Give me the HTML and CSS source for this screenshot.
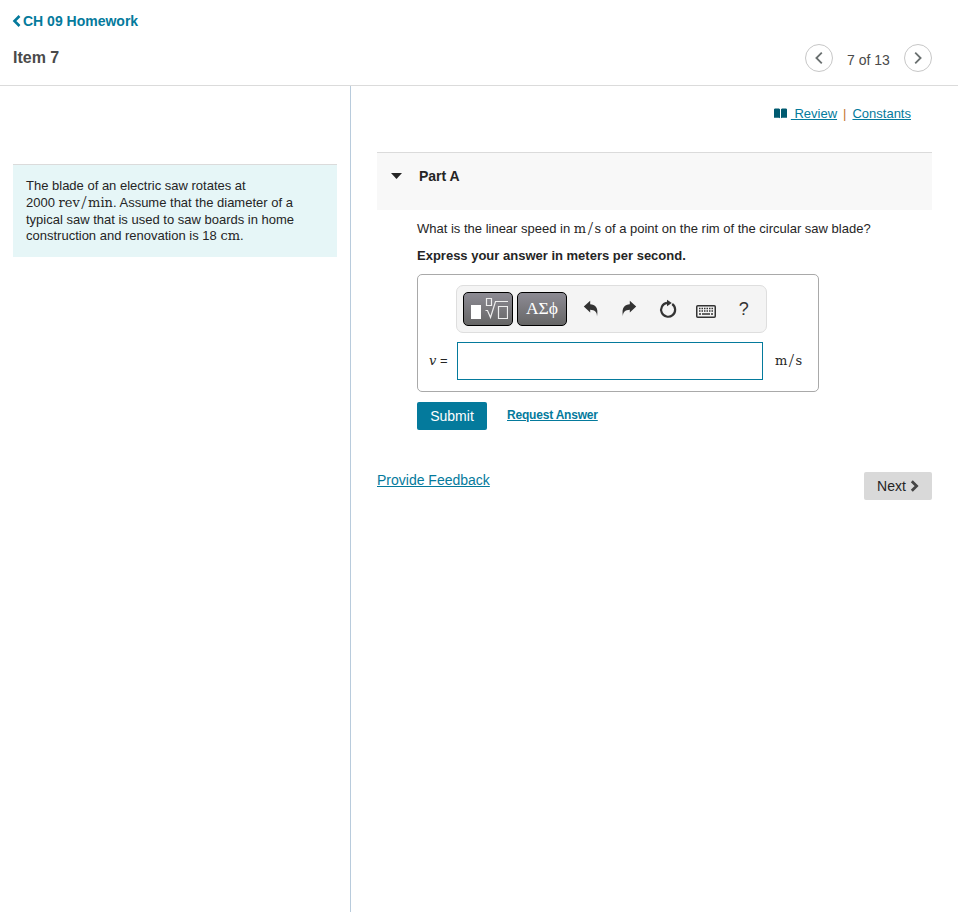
FILE: index.html
```
<!DOCTYPE html>
<html lang="en">
<head>
    <meta charset="UTF-8">
    <meta name="viewport" content="width=device-width, initial-scale=1.0">
    <title>CH 09 Homework - Item 7</title>
    <link rel="stylesheet" href="styles.css">
</head>
<body>
    <header class="header">
        <div class="header-left">
            <a class="back-link" href="#"><svg class="back-icon" width="9" height="12" viewBox="0 0 9 12"><path d="M7.500 1 2.500 6l5 5" fill="none" stroke="currentColor" stroke-width="2.600"/></svg><span>CH 09 Homework</span></a>
            <h1 class="item-title">Item 7</h1>
        </div>
        <nav class="pager">
            <a class="pager-button" href="#" aria-label="Previous"><svg width="10" height="14" viewBox="0 0 10 14"><path d="M7.800 1.600 2.400 7l5.400 5.400" fill="none" stroke="currentColor" stroke-width="1.800"/></svg></a>
            <span class="pager-text">7 of 13</span>
            <a class="pager-button" href="#" aria-label="Next"><svg width="10" height="14" viewBox="0 0 10 14"><path d="m2.200 1.600 5.400 5.400-5.400 5.400" fill="none" stroke="currentColor" stroke-width="1.800"/></svg></a>
        </nav>
    </header>

    <main class="content">
        <aside class="left-panel">
            <div class="problem">
                <p>The blade of an electric saw rotates at</p>
                <p>2000 <span class="math">rev<span class="slash">/</span>min</span>. Assume that the diameter of a</p>
                <p>typical saw that is used to saw boards in home</p>
                <p class="last-line">construction and renovation is 18 <span class="math">cm</span>.</p>
            </div>
        </aside>

        <section class="right-panel">
            <div class="resources">
                <svg class="book-icon" width="13" height="11" viewBox="0 0 13 11"><path d="M.8.500H5l1 .8v9l-1-.6H0V1.300zM8 .500h4.200l.8.800v8.400H8l-1 .6v-9z" fill="currentColor"/></svg>
                <a href="#">&nbsp;Review</a>
                <span class="divider">|</span>
                <a href="#">Constants</a>
            </div>

            <div class="part-header">
                <span class="caret"></span>
                <h2>Part A</h2>
            </div>

            <div class="part-body">
                <p class="question">What is the linear speed in <span class="math">m<span class="slash">/</span>s</span> of a point on the rim of the circular saw blade?</p>
                <p class="instructions">Express your answer in meters per second.</p>

                <div class="answer-box">
                    <div class="toolbar">
                        <button class="palette" aria-label="Templates"><svg width="40" height="24" viewBox="0 0 40 24"><path d="M3 8h10v14H3z" fill="#fff"/><path d="M18.500 1.500h5v7h-5zM30.500 9.500h9v12h-9zM17.500 13.500h2l3 7 5-16H40" fill="none" stroke="#eee" stroke-width="1.200"/></svg></button>
                        <button class="palette greek">ΑΣϕ</button>
                        <button class="tool undo" aria-label="Undo"><svg width="16" height="18" viewBox="0 0 16 18"><path d="M.8 6.500 7.200.8v3.500c4.700.2 8.600 2.800 6.800 12.200.2-4.400-2.200-6.600-6.800-6.700v2.800z" fill="currentColor"/></svg></button>
                        <button class="tool" aria-label="Redo"><svg width="16" height="18" viewBox="0 0 16 18"><path d="M15.200 6.500 8.800.8v3.500C4.100 4.500.2 7.100 2 16.500c-.2-4.400 2.200-6.600 6.800-6.700v2.800z" fill="currentColor"/></svg></button>
                        <button class="tool" aria-label="Reset"><svg class="reset-icon" width="18" height="20" viewBox="0 0 18 20"><path d="M13.200 5A7 7 0 1 1 8 3.800" fill="none" stroke="currentColor" stroke-width="2.200"/><path d="m8 .8 4.800 3.200L8 7.200z" fill="currentColor"/></svg></button>
                        <button class="tool" aria-label="Keyboard shortcuts"><svg class="keyboard-icon" width="20" height="13" viewBox="0 0 20 13"><rect x=".75" y=".75" width="18.500" height="11.500" rx="1" fill="none" stroke="currentColor" stroke-width="1.500"/><path d="M3 3.500h14M3 6h14" stroke="currentColor" stroke-width="1.500" stroke-dasharray="1.500 1"/><path d="M3 9h2m1 0h8m1 0h2" stroke="currentColor" stroke-width="1.500"/></svg></button>
                        <button class="tool help">?</button>
                    </div>
                    <div class="answer-row">
                        <label for="answer"><i>v</i> =</label>
                        <input type="text" id="answer">
                        <span class="math units">m<span class="slash">/</span>s</span>
                    </div>
                </div>

                <div class="actions">
                    <button class="submit">Submit</button>
                    <a class="request" href="#">Request Answer</a>
                </div>
            </div>

            <div class="bottom">
                <a class="feedback" href="#">Provide Feedback</a>
                <button class="next">Next <svg width="9" height="12" viewBox="0 0 9 12"><path d="m1.800 1.200 4.800 4.800-4.800 4.800" fill="none" stroke="#454545" stroke-width="2.800"/></svg></button>
            </div>
        </section>
    </main>
</body>
</html>
```
FILE: styles.css
```
* {
    box-sizing: border-box;
}
body {
    margin: 0;
    min-height: 100vh;
    display: flex;
    flex-direction: column;
    font-family: "Liberation Sans", Arial, sans-serif;
    font-size: 13px;
    color: #252525;
    background-color: #fff;
}
h1, h2, p {
    margin: 0;
}
a {
    color: #047a9c;
}
button {
    font-family: inherit;
    border: none;
    padding: 0;
    cursor: pointer;
}
svg {
    display: block;
}

/* Header */
.header {
    height: 86px;
    display: flex;
    justify-content: space-between;
    padding: 0 26px 0 13px;
    border-bottom: 1px solid #dbdbdb;
}
.back-link {
    display: flex;
    align-items: center;
    margin-top: 12px;
    height: 18px;
    font-size: 14px;
    font-weight: bold;
    text-decoration: none;
}
.back-icon {
    margin-left: -1px;
    margin-right: 2px;
}
.item-title {
    margin-top: 18px;
    font-size: 16px;
    line-height: 20px;
    color: #4a4a4a;
}
.pager {
    display: flex;
    margin-top: 44px;
}
.pager-button {
    width: 28px;
    height: 28px;
    display: flex;
    align-items: center;
    justify-content: center;
    border: 1px solid #c7c7c7;
    border-radius: 50%;
    color: #6a7070;
}
.pager-text {
    width: 71px;
    padding-top: 7px;
    text-align: center;
    font-size: 14px;
    line-height: 18px;
    color: #4a4a4a;
}

/* Panels */
.content {
    flex: 1;
    display: flex;
}
.left-panel {
    width: 351px;
    padding: 78px 13px 0;
    border-right: 1px solid #b8cbdc;
}
.problem {
    height: 93px;
    padding: 12px 13px;
    border-top: 1px solid #dbdbdb;
    background-color: #e6f6f7;
    line-height: 17px;
    white-space: nowrap;
}
.problem .last-line {
    line-height: 15px;
}
.math {
    font-family: "DejaVu Serif", serif;
    font-size: 13px;
    line-height: 1;
}
.slash {
    margin: 0 1.500px;
    font-family: "Liberation Serif", serif;
    font-size: 19px;
    line-height: 0;
    vertical-align: -2px;
}
.right-panel {
    flex: 1;
    padding: 0 26px;
}
.resources {
    height: 66px;
    padding: 19px 21px 0 0;
    display: flex;
    justify-content: flex-end;
    line-height: 17px;
}
.book-icon {
    margin: 3px 4px 0 0;
    color: #005a70;
}
.divider {
    margin: 0 6px;
    color: #c4752c;
}
.part-header {
    height: 58px;
    display: flex;
    padding: 14px 14px 0;
    border-top: 1px solid #dbdbdb;
    background-color: #f8f8f8;
}
.part-header h2 {
    font-size: 14px;
    line-height: 18px;
}
.caret {
    width: 11px;
    height: 6px;
    margin: 6px 17px 0 0;
    background-color: #252525;
    clip-path: polygon(0 0, 100% 0, 50% 100%);
}
.part-body {
    padding-left: 40px;
}
.question {
    padding-top: 10px;
    line-height: 18px;
    white-space: nowrap;
}
.instructions {
    margin-top: 9px;
    font-weight: bold;
    line-height: 18px;
}

/* Answer area */
.answer-box {
    width: 402px;
    height: 118px;
    margin-top: 9px;
    padding: 10px 0 0 11px;
    border: 1px solid #a9a9a9;
    border-radius: 5px;
}
.toolbar {
    width: 311px;
    height: 48px;
    margin-left: 27px;
    padding-left: 6px;
    display: flex;
    align-items: center;
    border: 1px solid #dedede;
    border-radius: 7px;
    background-color: #f4f4f4;
}
.palette {
    width: 50px;
    height: 34px;
    margin-right: 4px;
    display: flex;
    align-items: center;
    justify-content: center;
    border: 1.500px solid #000;
    border-radius: 5px;
    background: linear-gradient(#8d8b94, #666);
    color: #fff;
}
.greek {
    padding-bottom: 2px;
    font-family: "Liberation Serif", serif;
    font-size: 17.500px;
}
.tool {
    width: 38.200px;
    height: 34px;
    display: flex;
    align-items: center;
    justify-content: center;
    background: none;
    color: #333;
}
.undo {
    margin-left: 1px;
}
.reset-icon {
    margin-left: 2px;
}
.keyboard-icon {
    margin-top: 4px;
}
.help {
    font-size: 18px;
}
.answer-row {
    display: flex;
    align-items: center;
    margin-top: 9px;
}
.answer-row label {
    width: 28px;
    padding-bottom: 1px;
    font-size: 13px;
}
.answer-row i {
    font-family: "DejaVu Serif", serif;
    font-size: 13px;
}
.answer-row input {
    width: 306px;
    height: 38px;
    border: 1px solid #047a9c;
}
.units {
    margin-left: 12px;
    padding-bottom: 1px;
}
.actions {
    display: flex;
    margin-top: 10px;
}
.submit {
    width: 70px;
    height: 28px;
    border-radius: 2px;
    background-color: #047a9c;
    color: #fff;
    font-size: 14px;
}
.request {
    margin: 5px 0 0 20px;
    font-size: 12px;
    font-weight: bold;
    letter-spacing: -0.2px;
    line-height: 16px;
}
.bottom {
    display: flex;
    justify-content: space-between;
    margin-top: 42px;
}
.feedback {
    font-size: 14px;
    line-height: 17px;
}
.next {
    width: 68px;
    height: 28px;
    display: flex;
    align-items: center;
    justify-content: center;
    gap: 4px;
    border-radius: 2px;
    background-color: #d9d9d9;
    color: #252525;
    font-size: 14px;
}
```
